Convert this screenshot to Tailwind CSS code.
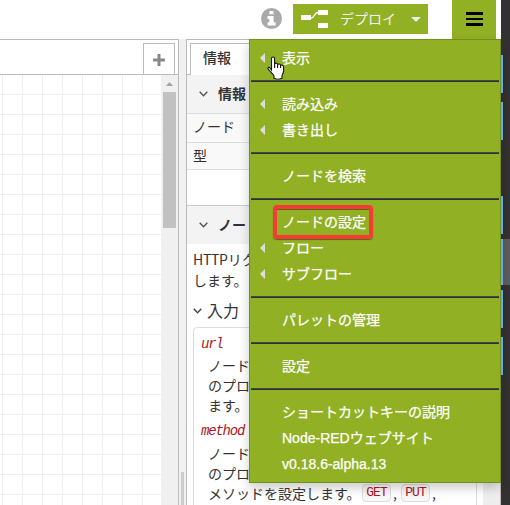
<!DOCTYPE html>
<html lang="ja">
<head>
<meta charset="utf-8">
<title>Node-RED</title>
<script src="https://cdn.jsdelivr.net/npm/@tailwindcss/browser@4"></script>
</head>
<body class="relative flex h-[505px] w-[510px] overflow-hidden bg-white font-['Liberation_Sans','Noto_Sans_CJK_JP',sans-serif] text-[14px] text-[#333]">
  <div class="flex h-full w-[501px] shrink-0 flex-col">
    <header class="flex h-[39px] shrink-0 pl-[261px]">
      <svg class="mt-2 h-[21px] w-[21px]" viewBox="0 0 21 21"><circle cx="10.5" cy="10.5" r="10.5" fill="#a9a9a9"/><path d="M8.4 3h4.2v3.3H8.4zM6.6 8h6v6.2h2V17.4h-8v-3.2h1.8v-3H6.6z" fill="#fff"/></svg>
      <button class="ml-[11px] mt-1 flex h-[30px] w-[135px] items-center bg-[#91b023] pl-2 text-[#f2f2f2]">
        <svg class="h-[18px] w-[27px]" viewBox="0 0 27 18"><path d="M0 5h10v5H0zM17 0h10v5H17zM17 13h10v5H17z" fill="#fff"/><path d="M10 8C14 8 13 2.5 17 2.5" fill="none" stroke="#fff" stroke-width="1.5"/></svg>
        <span class="-mt-px ml-3 w-[58px] whitespace-nowrap text-left leading-5">デプロイ</span>
        <svg class="ml-[13px] h-[5px] w-[10px]" viewBox="0 0 10 5"><path d="M0 0h10L5 5z" fill="#eee"/></svg>
      </button>
      <button class="ml-6 flex h-[39px] w-[44px] flex-col items-start bg-[#91b023] pl-[14px] pt-3">
        <span class="mb-[3px] h-[2.5px] w-[17px] bg-black"></span>
        <span class="mb-[3px] h-[2.5px] w-[17px] bg-black"></span>
        <span class="h-[2.5px] w-[17px] bg-black"></span>
      </button>
    </header>
    <main class="flex h-[466px] bg-[#f1f1f1]">
      <section class="flex w-[179px] shrink-0 flex-col border-r border-t border-[#bbb] bg-white">
        <div class="flex h-[35px] shrink-0 justify-end border-b border-[#bbb] pr-[3px] pt-[3px]">
          <button class="flex w-8 items-center justify-center border-x border-t border-[#bbb] pt-px">
            <svg class="h-3 w-3" viewBox="0 0 12 12"><path d="M4.5 0h3v4.5H12v3H7.5V12h-3V7.5H0v-3h4.5z" fill="#888"/></svg>
          </button>
        </div>
        <div class="flex grow">
          <svg class="h-[430px] w-[161px] shrink-0" shape-rendering="crispEdges"><defs><pattern id="grid" x="2" y="19" width="20" height="20" patternUnits="userSpaceOnUse"><path d="M0 0h20v1H1v19H0z" fill="#eee"/></pattern></defs><rect width="161" height="430" fill="url(#grid)"/></svg>
          <div class="flex w-[17px] flex-col bg-[#f0f0f0] pl-[2px] pt-[7px]">
            <svg class="ml-[3px] h-[4px] w-[7px]" viewBox="0 0 7 4"><path d="M3.5 0L7 4H0z" fill="#a3a3a3"/></svg>
            <div class="mt-[6px] h-[136px] w-[13px] bg-[#c1c1c1]"></div>
          </div>
        </div>
      </section>
      <div class="flex w-[7px] shrink-0 items-end pl-[2px]"><div class="h-[33px] w-[3px] bg-[#ccc]"></div></div>
      <section class="flex w-[315px] shrink-0 flex-col border-x border-t border-[#bbb] bg-white font-['Noto_Sans_CJK_JP',sans-serif]">
        <div class="flex h-[35px] shrink-0 pt-[3px]">
          <div class="w-[3px] border-b border-[#bbb]"></div>
          <div class="w-[70px] border-x border-t border-[#bbb] pl-3 pt-[3px] font-medium leading-5">情報</div>
          <div class="grow border-b border-[#bbb]"></div>
        </div>
        <div class="flex grow overflow-hidden">
          <div class="w-[296px] shrink-0">
            <h2 class="flex h-[39px] items-center border-b border-[#ddd] bg-[#f3f3f3] pl-3 font-bold"><svg class="h-[6px] w-[9px]" viewBox="0 0 9 6"><path d="M.7.8l3.8 4 3.8-4" fill="none" stroke="#555" stroke-width="1.4"/></svg><span class="-mt-[2px] ml-[10px] leading-5">情報</span></h2>
            <div class="h-[29px] border-b border-[#ddd] bg-[#f9f9f9] pl-[6px] pt-[2px] leading-5">ノード</div>
            <div class="h-[27px] border-b border-[#ddd] bg-[#f9f9f9] pl-[6px] pt-[2px] leading-5">型</div>
            <h2 class="mt-[35px] flex h-[39px] items-center border-t border-[#ccc] bg-[#f3f3f3] pl-3 font-bold"><svg class="h-[6px] w-[9px]" viewBox="0 0 9 6"><path d="M.7.8l3.8 4 3.8-4" fill="none" stroke="#555" stroke-width="1.4"/></svg><span class="-mt-[2px] ml-[10px] leading-5">ノー</span></h2>
            <p class="whitespace-nowrap pb-px pl-[6px] pt-[5px] leading-[21px]"><span class="tracking-[-0.3px]">HTTP</span>リク<br>します。</p>
            <h3 class="mt-[7px] flex h-[24px] items-center pl-[6px] text-[16px]"><svg class="h-[6px] w-[9px]" viewBox="0 0 9 6"><path d="M.7.8l3.8 4 3.8-4" fill="none" stroke="#444" stroke-width="1.4"/></svg><span class="-mt-[2px] ml-[5px] leading-6">入力</span></h3>
            <dl class="ml-[6px] mt-[4px] h-[200px] w-[284px] whitespace-nowrap rounded-sm border border-[#ddd]">
              <dt class="h-[27px] pl-[7px] pt-[6px] font-['Liberation_Mono',monospace] text-[14px] italic leading-5 tracking-[-1.2px] text-[#ad1625]">url</dt>
              <dd class="pl-[14px] leading-5">ノード<br>のプロ<br>ます。</dd>
              <dt class="h-[28px] pl-[7px] pt-[6px] font-['Liberation_Mono',monospace] text-[14px] italic leading-5 tracking-[-1.2px] text-[#ad1625]">method</dt>
              <dd class="pl-[14px] leading-[20px]">ノード<br>のプロ<br><span class="flex items-center"><span class="w-[154px]">メソッドを設定します。</span><code class="flex h-[18px] w-[29px] items-center justify-center rounded-sm border border-[#ddd] bg-[#f7f7f9] font-['Liberation_Mono',monospace] text-[13px] tracking-[-1px] text-[#ad1625]">GET</code><span class="w-[10px] pl-[2px]">,</span><code class="flex h-[18px] w-[29px] items-center justify-center rounded-sm border border-[#ddd] bg-[#f7f7f9] font-['Liberation_Mono',monospace] text-[13px] tracking-[-1px] text-[#ad1625]">PUT</code><span class="pl-[2px]">,</span></span></dd>
            </dl>
          </div>
          <div class="w-[17px] shrink-0 bg-[#eee]"></div>
        </div>
      </section>
    </main>
  </div>
  <aside class="h-full w-[9px] shrink-0 bg-[#333132] pt-[55px]">
    <div class="h-[38px] w-[2px] bg-[#70bff5]"></div>
    <div class="mt-[9px] h-[38px] w-[2px] bg-[#70bff5]"></div>
    <div class="mt-[56px] h-[38px] w-[2px] bg-[#70bff5]"></div>
    <div class="mt-[5px] h-[46px] w-full border-l-2 border-[#70bff5] bg-[#5d5b5c]"></div>
    <div class="mt-[5px] h-[38px] w-[2px] bg-[#70bff5]"></div>
    <div class="mt-[9px] h-[38px] w-[2px] bg-[#70bff5]"></div>
  </aside>

  <!-- Main menu -->
  <nav class="absolute left-[249px] top-[39px] h-[444px] w-[252px] border border-[#75901a] bg-[#91b023] px-px pt-[5px] leading-[26px] text-white shadow-[0_5px_10px_rgba(0,0,0,0.2)] [-webkit-text-stroke:0.25px_white]">
    <div class="flex h-[26px] items-center pl-[9px]"><svg class="h-[10px] w-[5px]" viewBox="0 0 5 10"><path d="M5 0v10L0 5z" fill="#ddd"/></svg><span class="ml-[17px]">表示</span></div>
    <hr class="my-[9px] h-[2px] border-b border-t border-b-[#303030] border-t-[#444]">
    <div class="flex h-[26px] items-center pl-[9px]"><svg class="h-[10px] w-[5px]" viewBox="0 0 5 10"><path d="M5 0v10L0 5z" fill="#ddd"/></svg><span class="ml-[17px]">読み込み</span></div>
    <div class="flex h-[26px] items-center pl-[9px]"><svg class="h-[10px] w-[5px]" viewBox="0 0 5 10"><path d="M5 0v10L0 5z" fill="#ddd"/></svg><span class="ml-[17px]">書き出し</span></div>
    <hr class="my-[9px] h-[2px] border-b border-t border-b-[#303030] border-t-[#444]">
    <div class="h-[26px] pl-[31px]">ノードを検索</div>
    <hr class="my-[9px] h-[2px] border-b border-t border-b-[#303030] border-t-[#444]">
    <div class="h-[26px] pl-[31px]">ノードの設定</div>
    <div class="flex h-[26px] items-center pl-[9px]"><svg class="h-[10px] w-[5px]" viewBox="0 0 5 10"><path d="M5 0v10L0 5z" fill="#ddd"/></svg><span class="ml-[17px]">フロー</span></div>
    <div class="flex h-[26px] items-center pl-[9px]"><svg class="h-[10px] w-[5px]" viewBox="0 0 5 10"><path d="M5 0v10L0 5z" fill="#ddd"/></svg><span class="ml-[17px]">サブフロー</span></div>
    <hr class="my-[9px] h-[2px] border-b border-t border-b-[#303030] border-t-[#444]">
    <div class="h-[26px] pl-[31px]">パレットの管理</div>
    <hr class="my-[9px] h-[2px] border-b border-t border-b-[#303030] border-t-[#444]">
    <div class="h-[26px] pl-[31px]">設定</div>
    <hr class="my-[9px] h-[2px] border-b border-t border-b-[#303030] border-t-[#444]">
    <div class="h-[26px] pl-[31px]">ショートカットキーの説明</div>
    <div class="h-[26px] pl-[31px]">Node-REDウェブサイト</div>
    <div class="h-[26px] pl-[31px]">v0.18.6-alpha.13</div>
  </nav>
  <div class="absolute left-[273px] top-[205px] h-[34px] w-[100px] rounded-[4px] border-4 border-[#f43c35] shadow-[0_1px_1px_rgba(0,0,0,0.4),inset_0_1px_0_rgba(0,0,0,0.4)]"></div>
  <!-- Hand pointer -->
  <svg class="absolute left-[266px] top-[56px] h-[24px] w-[19px]" viewBox="0 0 19 24"><path d="M5.5 14V2.6C5.5.4 8.6.4 8.6 2.6V8c.3-1.4 3-1.1 3 .7.5-1.2 3-.8 3 .8.6-1 3-.4 3 1.5v4c0 2-1.6 3.3-1.6 5v2.3c-2 1-6 1-8 0V20c-1-2-3.4-3.8-5.2-6.3C.8 11.6 2.8 10.7 4 12z" fill="#fff" stroke="#111" stroke-width="1.1"/><path d="M8.6 8v4M11.6 8.7V12M14.6 9.5V12" stroke="#111" stroke-width="1.1"/></svg>
</body>
</html>
